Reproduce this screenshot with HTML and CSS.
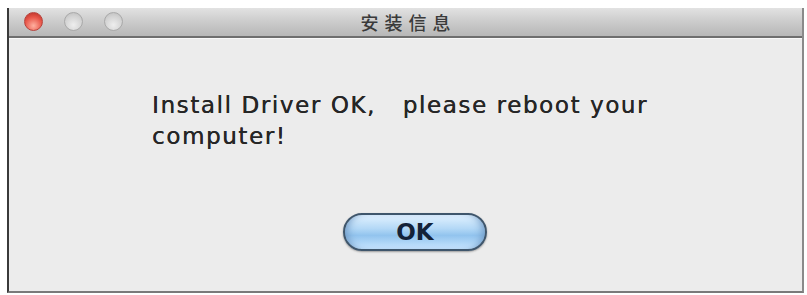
FILE: index.html
```html
<!DOCTYPE html>
<html>
<head>
<meta charset="utf-8">
<link rel="stylesheet" href="styles.css">
</head>
<body>
<div class="window">
  <div class="titlebar">
    <div class="lights">
      <span class="light close"></span>
      <span class="light"></span>
      <span class="light"></span>
    </div>
    <div class="title">安装信息</div>
  </div>
  <div class="content">
    <p class="message">Install Driver OK,&nbsp;&nbsp; please reboot your<br>computer!</p>
    <div class="actions">
      <button class="ok">OK</button>
    </div>
  </div>
</div>
</body>
</html>
```
FILE: styles.css
```css
html, body {
  margin: 0;
  padding: 0;
  background: #ffffff;
}
body {
  padding: 8px 3px 2px 7px;
  width: 807px;
  height: 295px;
  box-sizing: border-box;
}
.window {
  height: 285px;
  border-left: 2px solid #3a3a3a;
  border-right: 2px solid #8a8a8a;
  border-bottom: 2px solid #7a7a7a;
  background: #ececec;
  display: flex;
  flex-direction: column;
  box-sizing: border-box;
}
.titlebar {
  height: 28px;
  position: relative;
  background: linear-gradient(#e2e2e2 0%, #cdcdcd 45%, #b7b7b7 100%);
  border-bottom: 2px solid #6e6e6e;
  box-shadow: 0 1px 0 #f8f8f8;
  display: flex;
  align-items: center;
  justify-content: center;
}
.lights {
  position: absolute;
  left: 15px;
  top: 4px;
  display: flex;
  gap: 21px;
}
.light {
  width: 19px;
  height: 19px;
  border-radius: 50%;
  box-sizing: border-box;
  border: 1px solid #a9a9a9;
  background: radial-gradient(circle at 50% 70%, #eeeeee 0%, #d2d2d2 60%, #bababa 100%);
}
.light.close {
  border-color: #b8413a;
  background: radial-gradient(circle at 50% 75%, #ffb0a0 0%, #e8574a 55%, #b42a22 100%);
}
.title {
  font-family: "Noto Sans CJK SC", sans-serif;
  font-size: 18px;
  font-weight: 500;
  letter-spacing: 6px;
  color: #3a3a3a;
  margin-left: 6px;
}
.content {
  flex: 1;
  display: flex;
  flex-direction: column;
  padding: 52px 0 0 143px;
}
.message {
  margin: 0;
  font-family: "DejaVu Sans", sans-serif;
  font-size: 23px;
  letter-spacing: 1.6px;
  line-height: 31px;
  color: #262626;
  text-shadow: 0.3px 0 0 #262626;
}
.actions {
  padding-top: 61px;
  padding-left: 191px;
}
.ok {
  width: 144px;
  height: 38px;
  border-radius: 19px;
  border: 2px solid #3f566c;
  background: linear-gradient(#e2f2ff 0%, #b3d8f6 40%, #92c4ee 60%, #c8e6ff 100%);
  box-shadow: 0 1px 2px rgba(0,0,0,0.35), inset 8px 0 8px -6px #6f98c4, inset -8px 0 8px -6px #6f98c4;
  font-family: "DejaVu Sans", sans-serif;
  font-weight: bold;
  font-size: 23px;
  color: #142238;
  padding: 0;
}
```
